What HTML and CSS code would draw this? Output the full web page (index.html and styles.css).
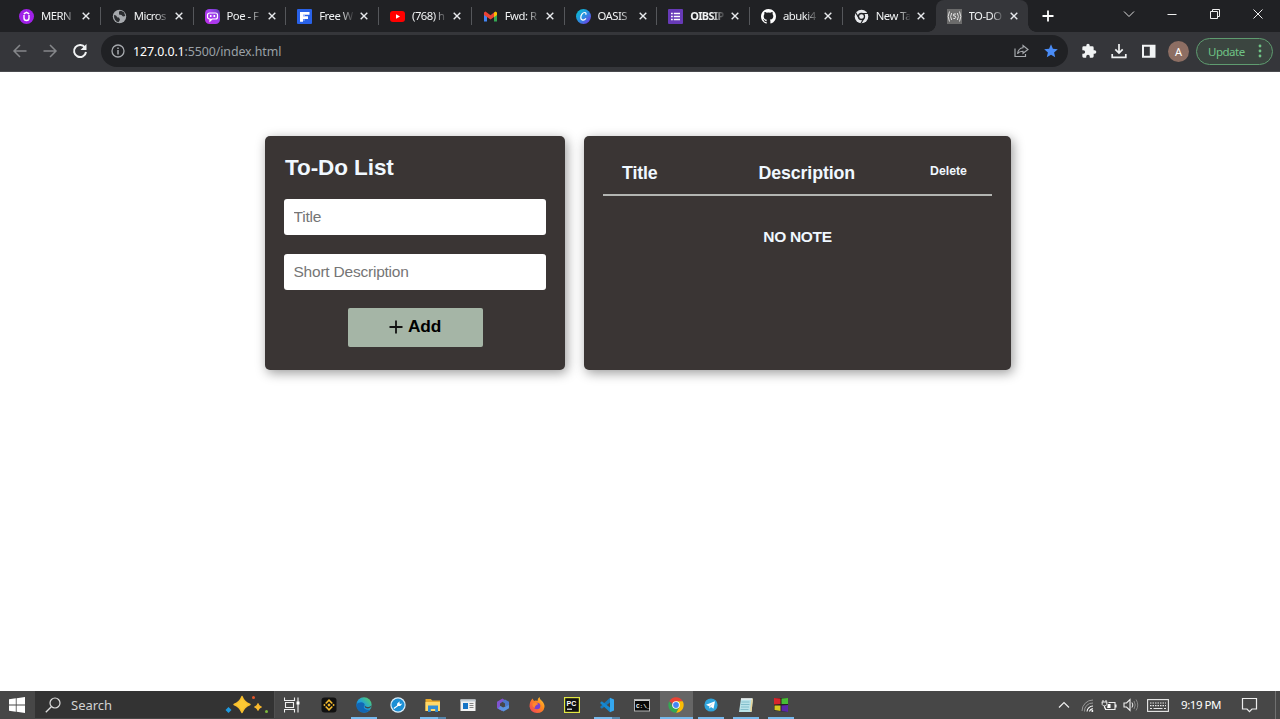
FILE: index.html
```html
<!DOCTYPE html>
<html lang="en">
<head>
<meta charset="utf-8">
<title>TO-DO List</title>
<link rel="stylesheet" href="styles.css">
</head>
<body>
<svg class="defs" width="0" height="0">
  <defs>
    <linearGradient id="poe" x1="0" y1="1" x2="1" y2="0"><stop offset="0" stop-color="#c02be8"/><stop offset=".6" stop-color="#a040f0"/><stop offset="1" stop-color="#5a3ab0"/></linearGradient>
    <linearGradient id="canva" x1="0" y1="0" x2="1" y2="1"><stop offset="0" stop-color="#00c4cc"/><stop offset=".5" stop-color="#2a8fe0"/><stop offset="1" stop-color="#7d2ae8"/></linearGradient>
    <linearGradient id="edge" x1="0" y1="1" x2="1" y2="0"><stop offset="0" stop-color="#0c59a4"/><stop offset=".45" stop-color="#1b9de2"/><stop offset="1" stop-color="#5fd657"/></linearGradient>
    <linearGradient id="fox" x1="0" y1="1" x2="1" y2="0"><stop offset="0" stop-color="#f03a5f"/><stop offset=".6" stop-color="#ff8a1d"/><stop offset="1" stop-color="#ffd83a"/></linearGradient>
    <symbol id="x" viewBox="0 0 8 8"><path d="M.7.7l6.600 6.600M7.300.7L.7 7.300" stroke="#e8eaed" stroke-width="1.400"/></symbol>
  </defs>
</svg>

<header class="tabstrip">
  <div class="tab"><svg class="fav" viewBox="0 0 15 15"><circle cx="7.5" cy="7.5" r="7.5" fill="#a020e8"/><path d="M5 6v3a2.500 2.500 0 0 0 5 0V6M4.800 4.800l2.700-1.500 2.700 1.500" fill="none" stroke="#fff" stroke-width="1.400"/></svg><span class="name">MERN</span><svg class="close"><use href="#x"/></svg></div>
  <div class="tab"><svg class="fav" viewBox="0 0 15 15"><circle cx="7.5" cy="7.5" r="6.7" fill="#a6a9ad"/><path d="M2 6l2 .5 1.500 2H7l1 2.300-1.500 2.500C3.500 12.500 1.800 10 2 6zM7 2.500l2-.8 3 1.500 1.300 3.800-2.300.5L9.500 6 7 5.500z" fill="#2b2d30"/></svg><span class="name">Micros</span><svg class="close"><use href="#x"/></svg></div>
  <div class="tab"><svg class="fav" viewBox="0 0 15 15"><rect width="15" height="15" rx="4.500" fill="url(#poe)"/><path d="M4.500 4h6a2 2 0 0 1 2 2v2a2 2 0 0 1-2 2H7l-2 2v-2h-.5a2 2 0 0 1-2-2V6a2 2 0 0 1 2-2z" fill="none" stroke="#fff" stroke-width="1.200"/><path d="M5.700 6v2M9.300 6v2" stroke="#fff" stroke-width="1.600"/></svg><span class="name">Poe - F</span><svg class="close"><use href="#x"/></svg></div>
  <div class="tab"><svg class="fav" viewBox="0 0 15 15"><rect width="15" height="15" rx="1" fill="#2962e8"/><path d="M3 3h9.500v2.700H6v1.600h5V10H6v2.700H3z" fill="#fff"/><path d="M6 6.500h2M6 11h2" stroke="#9cb8ff" stroke-width="1"/></svg><span class="name">Free W</span><svg class="close"><use href="#x"/></svg></div>
  <div class="tab"><svg class="fav" viewBox="0 0 15 15"><rect y="2" width="15" height="11" rx="3" fill="#f00"/><path d="M6 5.200v4.600l4-2.300z" fill="#fff"/></svg><span class="name">(768) h</span><svg class="close"><use href="#x"/></svg></div>
  <div class="tab"><svg class="fav" viewBox="0 0 15 15"><path d="M1 4v8.500h3V6z" fill="#4285f4"/><path d="M14 4v8.500h-3V6z" fill="#34a853"/><path d="M11 3.500L12.500 2.500 14 3.500V6l-3 2.300z" fill="#fbbc04"/><path d="M1 3.500L2.500 2.500l5 3.800 3.500-2.700v4.500L7.500 10.500 1 6z" fill="#ea4335"/></svg><span class="name">Fwd: R</span><svg class="close"><use href="#x"/></svg></div>
  <div class="tab"><svg class="fav" viewBox="0 0 15 15"><circle cx="7.500" cy="7.500" r="7.500" fill="url(#canva)"/><path d="M9.700 5.800c.7-1.200.2-2.300-1-2.300-2.200 0-3.900 2.500-3.900 5.100 0 3.200 3.400 3.200 5.200.8" fill="none" stroke="#fff" stroke-width="1.200"/></svg><span class="name">OASIS</span><svg class="close"><use href="#x"/></svg></div>
  <div class="tab"><svg class="fav" viewBox="0 0 15 15"><rect width="15" height="15" rx="1" fill="#673ab7"/><path d="M3 4.500h1.800M3 7.500h1.800M3 10.500h1.800M5.800 4.500H12M5.800 7.500H12M5.800 10.500H12" stroke="#fff" stroke-width="1.700"/></svg><span class="name bold">OIBSIP</span><svg class="close"><use href="#x"/></svg></div>
  <div class="tab"><svg class="fav" viewBox="0 0 16 16"><path fill="#fff" d="M8 0C3.580 0 0 3.580 0 8c0 3.540 2.290 6.530 5.470 7.590.4.070.55-.17.55-.38v-1.500c-2.230.5-2.700-1-2.700-1-.36-.9-.9-1.200-.9-1.200-.7-.5.1-.5.1-.5.8.1 1.200.8 1.200.8.7 1.200 1.900.9 2.300.7.100-.5.300-.9.500-1.100-1.800-.2-3.600-.9-3.600-4 0-.87.3-1.590.8-2.150-.1-.2-.4-1 .1-2.100 0 0 .67-.2 2.200.8a7.600 7.600 0 0 1 4 0c1.530-1 2.200-.8 2.200-.8.44 1.100.16 1.900.08 2.100.5.560.82 1.270.82 2.150 0 3.070-1.870 3.750-3.650 3.950.3.250.54.730.54 1.480v2.200c0 .2.150.46.55.38A8 8 0 0 0 16 8c0-4.420-3.580-8-8-8z"/></svg><span class="name">abuki4</span><svg class="close"><use href="#x"/></svg></div>
  <div class="tab last"><svg class="fav" viewBox="0 0 15 15"><circle cx="7.500" cy="7.500" r="6.800" fill="#e8eaed"/><circle cx="7.500" cy="7.500" r="3" fill="#e8eaed" stroke="#202124" stroke-width="1.300"/><path d="M7.500 4.500H14M5 9.200L1.800 3.800M10 9.200l-3 5" stroke="#202124" stroke-width="1.200"/></svg><span class="name">New Ta</span><svg class="close"><use href="#x"/></svg></div>
  <div class="tab active"><svg class="fav" viewBox="0 0 15 15"><rect width="15" height="15" fill="#6b6b6b"/><path d="M2.500 2.500Q-.2 7.500 2.500 12.500M4.700 4Q2.500 7.500 4.700 11M12.500 2.500Q15.200 7.500 12.500 12.500M10.300 4Q12.500 7.500 10.300 11M9 5H6.700v2h1.500q1.200 1.400-.2 2.500H6.300" fill="none" stroke="#e2e2e2" stroke-width="1"/></svg><span class="name">TO-DO</span><svg class="close"><use href="#x"/></svg></div>
  <svg class="newtab" viewBox="0 0 12 12"><path d="M6 .5v11M.5 6h11" stroke="#fff" stroke-width="1.800"/></svg>
  <div class="winctl">
    <svg viewBox="0 0 12 12"><path d="M1 3.500l5 5 5-5" fill="none" stroke="#ddd"/></svg>
    <svg viewBox="0 0 12 12"><path d="M1.500 6.500h9" stroke="#eee"/></svg>
    <svg viewBox="0 0 12 12"><path d="M1.500 3.500h7v7h-7zM3.500 3.500v-2h7v7h-2" fill="none" stroke="#eee"/></svg>
    <svg viewBox="0 0 12 12"><path d="M1.500 1.500l9 9M10.500 1.500l-9 9" stroke="#eee"/></svg>
  </div>
</header>

<nav class="toolbar">
  <div class="navbtns">
    <svg viewBox="0 0 16 16"><path d="M14.500 8H2.200M8 2L2 8l6 6" fill="none" stroke="#85878a" stroke-width="1.500"/></svg>
    <svg viewBox="0 0 16 16"><path d="M1.500 8h12.300M8 2l6 6-6 6" fill="none" stroke="#85878a" stroke-width="1.500"/></svg>
    <svg viewBox="0 0 16 16"><path d="M13 4.600A6 6 0 1 0 14 9" fill="none" stroke="#f1f3f4" stroke-width="2"/><path d="M14.500 1v6H8.500z" fill="#f1f3f4"/></svg>
  </div>
  <div class="omnibox">
    <svg class="info" viewBox="0 0 14 14"><circle cx="7" cy="7" r="6" fill="none" stroke="#a6a9ad" stroke-width="1.300"/><path d="M7 6v4.500M7 3.400v1.500" stroke="#a6a9ad" stroke-width="1.500"/></svg>
    <span class="url"><b>127.0.0.1</b>:5500/index.html</span>
    <svg class="share" viewBox="0 0 15 14"><path d="M1 4.500v8h10.500V10" fill="none" stroke="#a6a9ad" stroke-width="1.200"/><path d="M9 1.500L14 5.500 9 9.300V7.200Q5.500 7 3.500 9.800 4.300 4.300 9 3.800z" fill="none" stroke="#a6a9ad" stroke-width="1.100"/></svg>
    <svg class="star" viewBox="0 0 14 14"><path d="M7 .3l1.900 4.500 4.900.4L10.100 8.400l1.100 4.900L7 10.700l-4.200 2.600 1.100-4.900L.2 5.200l4.900-.4z" fill="#4a8cf7"/></svg>
  </div>
  <div class="exts">
    <svg viewBox="0 0 24 24"><path fill="#f1f3f4" d="M20.500 11H19V7a2 2 0 0 0-2-2h-4V3.500a2.500 2.500 0 0 0-5 0V5H4a2 2 0 0 0-2 2v3.800h1.500a2.700 2.700 0 0 1 0 5.400H2V20a2 2 0 0 0 2 2h3.800v-1.500a2.700 2.700 0 0 1 5.400 0V22H17a2 2 0 0 0 2-2v-4h1.500a2.500 2.500 0 0 0 0-5z"/></svg>
    <svg viewBox="0 0 16 16"><path d="M8 1v9M4.300 6.300L8 10l3.700-3.700M1.200 11v3.300h13.600V11" fill="none" stroke="#f1f3f4" stroke-width="1.700"/></svg>
    <svg viewBox="0 0 16 16"><path d="M1 1.700h13.500v13H1zM3 3.700v9h5.800v-9z" fill="#f1f3f4" fill-rule="evenodd"/></svg>
  </div>
  <span class="avatar">A</span>
  <div class="update"><span>Update</span><svg viewBox="0 0 4 14"><g fill="#6fc385"><circle cx="2" cy="2" r="1.400"/><circle cx="2" cy="7" r="1.400"/><circle cx="2" cy="12" r="1.400"/></g></svg></div>
</nav>

<main class="page">
  <form class="card entry">
    <h1>To-Do List</h1>
    <input type="text" placeholder="Title">
    <input type="text" placeholder="Short Description">
    <button type="button"><svg viewBox="0 0 14 14"><path d="M7 .5v13M.5 7h13" stroke="#111" stroke-width="1.800"/></svg>Add</button>
  </form>
  <section class="card notes">
    <div class="cols"><h2 class="ctitle">Title</h2><h2 class="cdesc">Description</h2><h5>Delete</h5></div>
    <p class="empty">NO NOTE</p>
  </section>
</main>

<footer class="taskbar">
  <div class="start"><svg viewBox="0 0 16 16"><path d="M0 2.300l6.800-1v6.300H0zM7.600 1.200L16 0v7.600H7.600zM0 8.400h6.800v6.300L0 13.700zM7.600 8.400H16V16l-8.400-1.200z" fill="#fff"/></svg></div>
  <div class="search"><svg class="lens" viewBox="0 0 16 16"><circle cx="10" cy="6" r="5" fill="none" stroke="#ddd" stroke-width="1.200"/><path d="M6.300 9.700L.8 15.200" stroke="#ddd" stroke-width="1.300"/></svg><span>Search</span>
    <svg class="sparkle" viewBox="0 0 44 20"><path d="M17 1.500q2 5.500 8 8-6 2.500-8 8-2-5.500-8-8 6-2.500 8-8z" fill="#fcc934" stroke="#f9bf2d" stroke-width="1.400" stroke-linejoin="round"/><path d="M33 8.500q.8 2.500 3.500 3.500-2.700 1-3.500 3.500-.8-2.500-3.500-3.500 2.700-1 3.500-3.500z" fill="#f9b92d" stroke="#f9b92d"/><path d="M3.500 12l3 3-3 3-3-3z" fill="#1f9ae0"/><circle cx="28.500" cy="2.500" r="1.500" fill="#e8562a"/><circle cx="41.500" cy="16.500" r="1.500" fill="#7cb93e"/></svg>
  </div>
  <div class="view"><svg viewBox="0 0 16 16"><path d="M.5 .5v3h10v-3M.5 15.500v-3h10v3M1.500 5.500h8v5h-8zM14 .5v15" fill="none" stroke="#eee" stroke-width="1.100"/><path d="M12.500 4.500h3v3h-3z" fill="#fff"/></svg></div>
  <div class="apps">
    <div class="app"><svg viewBox="0 0 16 16"><rect x=".5" y=".5" width="15" height="15" rx="3" fill="#111"/><path d="M4.700 6.500L8 3.200l3.300 3.300M4.700 9.500L8 12.800l3.300-3.300" fill="none" stroke="#f3ba2f" stroke-width="1.600"/><path d="M8 6.300L9.700 8 8 9.700 6.300 8zM3.400 6.800L4.600 8 3.400 9.200 2.200 8zM12.600 6.800L13.800 8l-1.200 1.200L11.400 8z" fill="#f3ba2f"/></svg></div>
    <div class="app run"><svg viewBox="0 0 16 16"><circle cx="8" cy="8" r="7.700" fill="url(#edge)"/><path d="M.4 8C2 4.500 8.500 4 8.700 8c-2 2-1 5.500 5.300 4.500C11 17 1 17 .4 8z" fill="#1266b4"/><path d="M8.800 8.500c2 2.300 5 1.700 7-.3-.2 2.500-3.500 4-6 2.800-1-.6-1.400-1.600-1-2.500z" fill="#45474a"/></svg></div>
    <div class="app"><svg viewBox="0 0 16 16"><circle cx="8" cy="8" r="7.700" fill="#dceefa"/><circle cx="8" cy="8" r="6.500" fill="#1c8fd5"/><path d="M3.500 11L7 8.500l.2-2 2.500-2.300-.3 2 1 .8 2-.5-2.200 2.600-2-.1-4 3z" fill="#fff"/></svg></div>
    <div class="app run multi"><svg viewBox="0 0 16 16"><path d="M.5 2h5.300l1.500 1.500H15V14H.5z" fill="#e8a92b"/><path d="M.5 5H15v9H.5z" fill="#ffd869"/><path d="M3 8.500h10V15h-2.800v-3H5.800v3H3z" fill="#328ed4"/></svg></div>
    <div class="app"><svg viewBox="0 0 16 16"><rect x=".5" y="2.500" width="15" height="11.500" fill="#f2f2f2"/><path d="M.5 2.500h15v2H.5z" fill="#c3ccd4"/><path d="M3 6h5v6H3z" fill="#1674c6"/><path d="M9.500 6.500h4M9.500 8.500h4M9.500 10.500h4" stroke="#666" stroke-width=".8"/></svg></div>
    <div class="app"><svg viewBox="0 0 16 16"><path d="M7.500 1.500L2 4.800v6.400L7 14 8 11 5 9V6.500L10 3.200z" fill="#8054d0"/><path d="M10 2.500l4 2.300v5L10 9.500V6.500L7 4.500z" fill="#4c78ca"/><path d="M14 8v3.200L8.500 14.500 3 11.500 5.500 9 8 10.500z" fill="#5b93df"/></svg></div>
    <div class="app"><svg viewBox="0 0 16 16"><path d="M3.500 1.500L5 4q2-1 3.500 0 0-2.500 2-4 0 2 2 3.500 3.300 3 3 6.500-1 6-7.500 6T.5 9.500q0-5 3-8z" fill="url(#fox)"/><circle cx="8" cy="9" r="3.300" fill="#7841d0"/><path d="M3.500 6.500L7 5.500 9.500 7 7.500 8Q5.500 9 6 11 3 10 3.500 6.500z" fill="#ff872d"/></svg></div>
    <div class="app"><svg viewBox="0 0 16 16"><rect x=".6" y=".6" width="14.800" height="14.800" fill="#101010" stroke="#e1e743" stroke-width="1.200"/><text x="2.600" y="8.800" class="pc">PC</text><path d="M3 12.200h5" stroke="#fff" stroke-width="1.200"/></svg></div>
    <div class="app run multi"><svg viewBox="0 0 16 16"><path d="M11 .8L1 10l1.800 1.800L11 5.500z" fill="#1979ba"/><path d="M1 6l1.800-1.700L11 10.500v4.700z" fill="#1688d1"/><path d="M11 .8v14.400L15 13.500v-11z" fill="#34a7ef"/></svg></div>
    <div class="app"><svg viewBox="0 0 16 16"><rect x=".5" y="2.500" width="15" height="11.500" fill="#080808" stroke="#b3b3b3"/><path d="M1 3.500h14" stroke="#ccc"/><text x="2" y="11" class="cmd">C:\_</text></svg></div>
    <div class="app run focus"><svg viewBox="0 0 16 16"><path d="M8 8L1.300 4.200A7.700 7.700 0 0 1 14.700 4.200H8z" fill="#ea4335"/><path d="M8 8V4.200h6.700A7.700 7.700 0 0 1 8 15.700L11.300 10z" fill="#fbbc05"/><path d="M8 8l3.300 2L8 15.700A7.700 7.700 0 0 1 1.300 4.200L4.700 10z" fill="#34a853"/><circle cx="8" cy="8" r="3.800" fill="#fff"/><circle cx="8" cy="8" r="2.900" fill="#4285f4"/></svg></div>
    <div class="app run"><svg viewBox="0 0 16 16"><circle cx="8" cy="8" r="6.600" fill="#2fa4dc"/><path d="M3 7.800l9-3.500-1.500 7.500L8 10l-1.500 1.500L6 9.200z" fill="#fff"/><path d="M6 9.200l4.200-3.300-3 3.800-.7 1.800z" fill="#b7dbec"/></svg></div>
    <div class="app run"><svg viewBox="0 0 16 16"><path d="M3 1.500h12L13.500 15H1z" fill="#b9e3e9"/><path d="M13.500 2l1.500-.5L13.500 15 12 14z" fill="#e9d497"/><path d="M3 2h11" stroke="#eee" stroke-width="1.500"/><path d="M3.500 5h8M3 7.500h8.500M3 10h8M2.500 12.500h8" stroke="#75b6c4" stroke-width=".8"/></svg></div>
    <div class="app run"><svg viewBox="0 0 16 16"><path d="M1 1h14v14L1 13.500z" fill="#222"/><path d="M1 1l6.500.5V7L1 7.500z" fill="#d7262c"/><path d="M8.500 1.500L15 1v6H8.500z" fill="#47bd35"/><path d="M1.500 8.500h6V14l-6-1z" fill="#d6c820"/><path d="M8.500 8.500L15 8v7l-6.500-1z" fill="#5b27a7"/></svg></div>
  </div>
  <div class="tray">
    <svg class="up" viewBox="0 0 12 12"><path d="M1 8.500l5-5 5 5" fill="none" stroke="#eee" stroke-width="1.200"/></svg>
    <svg class="wifi" viewBox="0 0 13 13"><path d="M1 12A11 11 0 0 1 12 1M3.500 12.500A8 8 0 0 1 12 4" fill="none" stroke="#999"/><path d="M6 12.500A6 6 0 0 1 12 7M8.500 12.500Q9 10 12 9.700" fill="none" stroke="#fff" stroke-width="1.100"/><circle cx="11.300" cy="12" r="1" fill="#fff"/></svg>
    <svg class="battery" viewBox="0 0 16 13"><path d="M7.500 3.500h6.500v7H4.500V8.500M15 5.500v3" fill="none" stroke="#eee" stroke-width="1.100"/><path d="M.7 3h5.600M2 1v2M5 1v2M1.200 3v2.500l1.500 1.500h1.600l1.500-1.500V3M3.500 7v2.500" fill="none" stroke="#eee"/><path d="M6.800 5h2.700v4H6.200z" fill="#fff"/></svg>
    <svg class="sound" viewBox="0 0 16 14"><path d="M1 5h2.500L7 1.500v11L3.500 9H1z" fill="none" stroke="#eee" stroke-width="1.100"/><path d="M9 4.500q1.700 2.500 0 5" fill="none" stroke="#eee"/><path d="M11 3q2.500 4 0 8M13 1.500q3.500 5.500 0 11" fill="none" stroke="#888"/></svg>
    <svg class="kbd" viewBox="0 0 22 13"><rect x=".6" y=".6" width="20.800" height="11.800" fill="none" stroke="#e8e8e8" stroke-width="1.100"/><path d="M3 4h16M3 6.700h16" stroke="#e8e8e8" stroke-width="1.200" stroke-dasharray="1.500 1"/><path d="M3 9.500h2M6.500 9.500h9M17 9.500h2" stroke="#e8e8e8" stroke-width="1.200"/></svg>
    <span class="clock">9:19 PM</span>
    <svg class="bell" viewBox="0 0 17 16"><path d="M1.500 1.500h14v10.500H11l-2.500 2.700L6 12H1.500z" fill="none" stroke="#eee" stroke-width="1.200"/></svg>
  </div>
</footer>
</body>
</html>
```
FILE: styles.css
```css
* { box-sizing: border-box; }
body {
  margin: 0;
  width: 1280px;
  height: 719px;
  overflow: hidden;
  display: flex;
  flex-direction: column;
  background: #fff;
  font-family: "Liberation Sans", Arial, sans-serif;
}
svg { display: block; flex: none; }
.defs { position: absolute; }

.tabstrip {
  height: 32px;
  flex: none;
  display: flex;
  align-items: center;
  padding-left: 8px;
  background: #202124;
  font-family: "Noto Sans", sans-serif;
}
.tab {
  width: 92.750px;
  height: 32px;
  flex: none;
  display: flex;
  align-items: center;
  padding-left: 11px;
  background: linear-gradient(#55575b, #55575b) right center / 1px 18px no-repeat;
}
.tab.last { background: none; }
.tab.active { position: relative; background: #35363a; border-radius: 8px 8px 0 0; }
.tab.active::before, .tab.active::after {
  content: "";
  position: absolute;
  bottom: 0;
  width: 8px;
  height: 8px;
}
.tab.active::before { left: -8px; background: radial-gradient(circle at 0 0, #202124 7.5px, #35363a 8px); }
.tab.active::after { right: -8px; background: radial-gradient(circle at 100% 0, #202124 7.5px, #35363a 8px); }
.fav { width: 15px; height: 15px; }
.name {
  width: 34px;
  margin: 0 7px 0 7px;
  white-space: nowrap;
  font-size: 11.300px;
  letter-spacing: -.5px;
  line-height: 16px;
  color: #f1f3f4;
  -webkit-mask-image: linear-gradient(90deg, #000 65%, rgba(0, 0, 0, .1));
  mask-image: linear-gradient(90deg, #000 65%, rgba(0, 0, 0, .1));
}
.name.bold { font-weight: 700; font-size: 11px; letter-spacing: -.7px; }
.close { width: 8px; height: 8px; }
.newtab { width: 12px; height: 12px; margin-left: 14px; }
.winctl { display: flex; gap: 31px; margin: -5px 16px 0 auto; }
.winctl svg { width: 12px; height: 12px; }

.toolbar {
  height: 40px;
  flex: none;
  display: flex;
  align-items: center;
  padding: 0 7px 1px 12px;
  background: #35363a;
  border-bottom: 1px solid #4a4b4f;
  font-family: "Noto Sans", sans-serif;
}
.navbtns { display: flex; gap: 14px; }
.navbtns svg { width: 16px; height: 16px; }
.omnibox {
  width: 967px;
  height: 32px;
  margin-left: 13px;
  padding: 0 10px;
  display: flex;
  align-items: center;
  border-radius: 16px;
  background: #202124;
}
.info { width: 14px; height: 14px; }
.url { margin-left: 8px; font-size: 12.400px; letter-spacing: -.1px; color: #9aa0a6; white-space: nowrap; }
.url b { font-weight: 400; color: #fff; }
.share { width: 15px; height: 14px; margin-left: auto; }
.star { width: 14px; height: 14px; margin-left: 15px; }
.exts { display: flex; gap: 14px; margin-left: 13px; }
.exts svg { width: 16px; height: 16px; }
.avatar {
  width: 21px;
  height: 21px;
  margin-left: 11px;
  border-radius: 50%;
  background: #8d6e63;
  color: #fff;
  font-size: 11px;
  line-height: 21px;
  text-align: center;
}
.update {
  width: 77px;
  height: 27px;
  margin-left: 7px;
  padding: 0 10px 0 11px;
  display: flex;
  align-items: center;
  justify-content: space-between;
  border: 1px solid #5f9c70;
  border-radius: 14px;
  background: #3b4540;
  color: #6fc385;
  font-size: 11.500px;
  letter-spacing: -.5px;
}
.update svg { width: 4px; height: 14px; }

.page {
  height: 619px;
  flex: none;
  display: flex;
  align-items: flex-start;
  gap: 19px;
  padding: 64px 0 0 265px;
}
.card {
  height: 234px;
  border-radius: 5px;
  background: #3a3534;
  color: #f0f8ff;
  box-shadow: 2px 3px 12px rgba(0, 0, 0, .4);
}
.entry {
  width: 300px;
  padding: 19px;
  display: flex;
  flex-direction: column;
}
.entry h1 {
  margin: 0 0 18px 1px;
  font-size: 22.500px;
  letter-spacing: -.08px;
  line-height: 26px;
}
.entry input {
  height: 36px;
  margin: 0 0 18.500px;
  padding: 0 9.500px;
  border: 0;
  border-radius: 3px;
  background: #fff;
  font: 15.500px "Liberation Sans", Arial, sans-serif;
  letter-spacing: -.22px;
}
.entry input::placeholder { color: #757575; }
.entry button {
  width: 135px;
  height: 38.500px;
  align-self: center;
  display: flex;
  align-items: center;
  justify-content: center;
  gap: 5px;
  padding: 0 0 1px;
  border: 0;
  border-radius: 2px;
  background: #a5b5a6;
  color: #000;
  font: bold 17.300px "Liberation Sans", Arial, sans-serif;
  letter-spacing: -.2px;
}
.entry button svg { width: 14px; height: 14px; }
.notes { width: 427px; padding: 19px; }
.cols {
  height: 41px;
  display: flex;
  align-items: flex-start;
  border-bottom: 2px solid #b3b5b2;
}
.cols h2 { margin: 8px 0 0; font-size: 17.800px; letter-spacing: -.12px; line-height: 21px; }
.ctitle { padding-left: 19px; width: 155.500px; }
.cdesc { width: 171.500px; }
.cols h5 { margin: 8px 0 0; font-size: 12.300px; line-height: 16px; }
.empty {
  margin: 32px 0 0;
  text-align: center;
  font-weight: 700;
  font-size: 15.500px;
  letter-spacing: -.3px;
  line-height: 18px;
}

.taskbar {
  height: 28px;
  flex: none;
  display: flex;
  align-items: center;
  background: #474747;
  font-family: "Noto Sans", sans-serif;
}
.start { width: 35px; padding-left: 9px; }
.start svg { width: 16px; height: 16px; }
.search {
  width: 240px;
  height: 27px;
  margin-bottom: 1px;
  display: flex;
  align-items: center;
  padding: 1px 5px 0 10px;
  background: #333;
  border-right: 1px solid #505050;
  color: #d2d2d2;
  font-size: 13px;
}
.lens { width: 16px; height: 16px; margin-right: 10px; }
.sparkle { width: 44px; height: 20px; margin-left: auto; }
.view { width: 36.500px; padding-left: 9px; }
.view svg { width: 16px; height: 16px; }
.apps { display: flex; height: 28px; }
.app {
  width: 34.750px;
  height: 28px;
  display: flex;
  align-items: center;
  justify-content: center;
}
.app svg { width: 16px; height: 16px; }
.run { background: linear-gradient(#76b9ed, #76b9ed) center bottom / 26px 2px no-repeat; }
.multi { background: linear-gradient(90deg, #76b9ed 18px, #5585aa 18px) center bottom / 26px 2px no-repeat; }
.focus { background: linear-gradient(#76b9ed, #76b9ed) center bottom / 33px 2px no-repeat, linear-gradient(#666, #666) center / 33px 28px no-repeat; }
.pc { font: bold 7px "Liberation Sans", sans-serif; fill: #fff; }
.cmd { font: bold 6px "Liberation Mono", monospace; fill: #fff; }
.tray {
  flex: 1;
  height: 28px;
  display: flex;
  align-items: center;
  justify-content: flex-end;
  margin-right: 4px;
  padding-right: 17px;
  border-right: 1px solid #707070;
}
.up { width: 12px; height: 12px; }
.wifi { width: 13px; height: 13px; margin-left: 11px; }
.battery { width: 16px; height: 13px; margin-left: 7px; }
.sound { width: 16px; height: 14px; margin-left: 6px; }
.kbd { width: 22px; height: 13px; margin-left: 8px; }
.clock {
  width: 41px;
  margin-left: 12px;
  padding-bottom: 1px;
  font-size: 11.500px;
  letter-spacing: -.45px;
  white-space: nowrap;
  color: #fff;
}
.bell { width: 17px; height: 16px; margin-left: 19px; }
```
